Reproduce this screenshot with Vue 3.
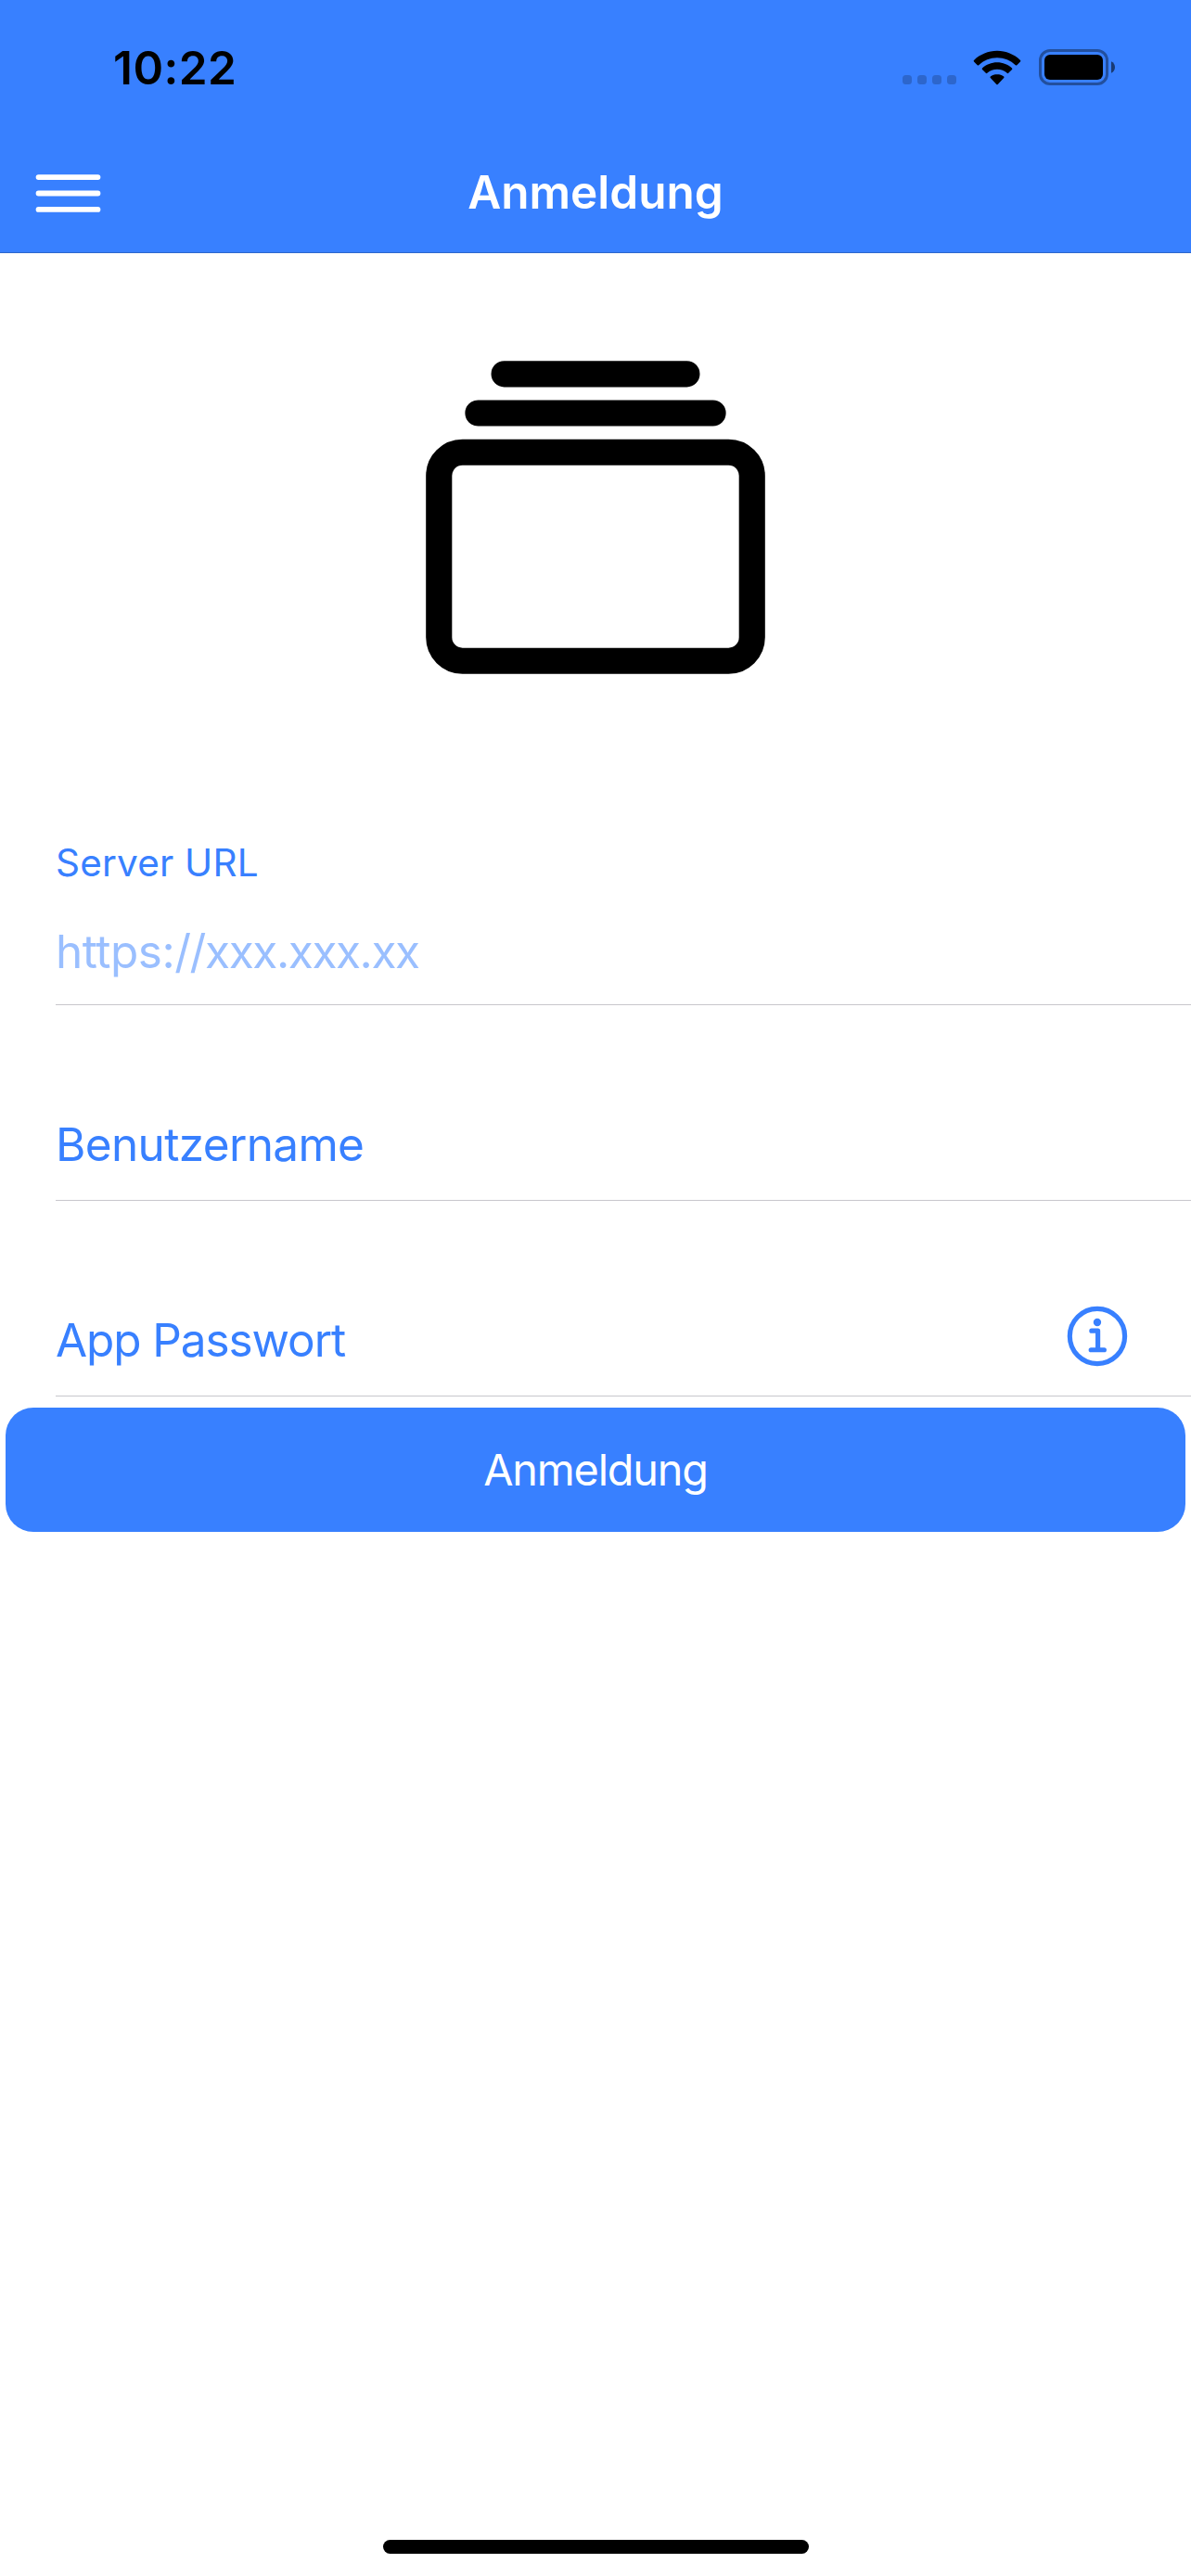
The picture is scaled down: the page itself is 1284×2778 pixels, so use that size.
<script setup>
import { ref } from 'vue'

const serverHint = ref({ scheme: 'https:', host: '//xxx.xxx.xx' })
</script>

<template>
  <div class="screen">
    <header class="header">
      <div class="status">
        <span class="time">10:22</span>
        <div class="indicators">
          <div class="dots"><i v-for="n in 4" :key="n" class="dot"></i></div>
          <svg class="wifi" viewBox="0 0 52 38" width="52" height="38">
            <path d="M26 0.8C16.5 0.8 7.6 4.6 1 10.9c-.5.5-.5 1 0 1.5l3.7 3.8c.5.5 1 .5 1.5 0C11.5 11.2 18.5 8.3 26 8.3s14.5 2.9 19.8 7.9c.5.5 1 .5 1.5 0l3.7-3.8c.5-.5.5-1 0-1.5C44.4 4.6 35.5.8 26 .8z" />
            <path d="M26 13.3c-6.1 0-11.7 2.3-16 6.2-.5.5-.5 1 0 1.5l3.8 3.8c.5.5 1 .5 1.5 0 2.9-2.5 6.6-4 10.7-4s7.8 1.5 10.7 4c.5.5 1 .5 1.5 0l3.8-3.8c.5-.5.5-1 0-1.5-4.3-3.9-9.9-6.2-16-6.2z" />
            <path d="M26 26c-2.7 0-5.2.9-7.2 2.5-.5.5-.5 1 0 1.5l6.5 6.9c.5.5.9.5 1.4 0l6.5-6.9c.5-.5.5-1 0-1.5-2-1.6-4.5-2.5-7.2-2.5z" />
          </svg>
          <svg class="battery" viewBox="0 0 84 40" width="84" height="40">
            <rect x="1.5" y="1.5" width="72" height="36" rx="10.5" fill="none" stroke="#000" stroke-opacity=".38" stroke-width="3" />
            <rect x="6" y="6" width="63" height="27" rx="6" />
            <path d="M78 13.3c2.5 1 4 3.5 4 6.2s-1.5 5.2-4 6.2z" fill-opacity=".55" />
          </svg>
        </div>
      </div>
      <div class="toolbar">
        <button class="menu" aria-label="Menu">
          <svg viewBox="0 0 512 512" width="93" height="93">
            <path d="M80 160h352M80 256h352M80 352h352" fill="none" stroke="#fff" stroke-width="32" stroke-linecap="round" />
          </svg>
        </button>
        <h1 class="title">Anmeldung</h1>
      </div>
    </header>

    <main>
      <div class="logo">
        <svg viewBox="0 0 512 512" width="450" height="450">
          <g fill="none" stroke="#000" stroke-width="32">
            <rect x="64" y="176" width="384" height="256" rx="28.87" />
            <path d="M144 80h224M112 128h288" stroke-linecap="round" />
          </g>
        </svg>
      </div>

      <form class="form" @submit.prevent>
        <div class="item stacked">
          <label class="caption">Server URL</label>
          <span class="placeholder"><span class="scheme">{{ serverHint.scheme }}</span>{{ serverHint.host }}</span>
        </div>
        <div class="item">
          <label class="label">Benutzername</label>
        </div>
        <div class="item">
          <label class="label password">App Passwort</label>
          <svg class="info" viewBox="0 0 512 512" width="82.5" height="82.5">
            <g fill="none" stroke="#3880ff" stroke-width="32" stroke-linecap="round">
              <circle cx="248" cy="248" r="184" />
              <path d="M210 212h42v124" stroke-linejoin="round" />
              <path d="M206 340h88" />
            </g>
            <circle cx="248" cy="155" r="26" fill="#3880ff" />
          </svg>
        </div>
        <button class="submit" type="submit">Anmeldung</button>
      </form>
    </main>

    <div class="home-bar"></div>
  </div>
</template>

<style>
body {
  background: #fff;
}
</style>

<style scoped>
.screen {
  box-sizing: border-box;
  width: 1284px;
  height: 2778px;
  padding-bottom: 24px;
  display: flex;
  flex-direction: column;
  overflow: hidden;
  background: #fff;
  font-family: Inter, "Liberation Sans", sans-serif;
}

.header {
  box-sizing: border-box;
  height: 273px;
  background: #3880ff;
  border-bottom: 1px solid #2d66cc;
}

.status {
  height: 146px;
  padding: 0 80px 0 122px;
  display: flex;
  align-items: center;
  justify-content: space-between;
}

.time {
  font-size: 49.5px;
  font-weight: 600;
  line-height: 60px;
  letter-spacing: 0.45px;
  color: #000;
}

.indicators {
  display: flex;
  align-items: center;
}

.dots {
  display: flex;
  gap: 6px;
  margin: 26px 18px 0 0;
}

.dot {
  width: 10px;
  height: 10px;
  border-radius: 3.5px;
  background: #2d66cc;
}

.wifi {
  margin-right: 19px;
}

.toolbar {
  height: 125px;
  display: grid;
  grid-template-columns: 147px 1fr 147px;
  align-items: center;
}

.menu {
  display: flex;
  justify-content: center;
  padding: 0;
  border: 0;
  background: none;
}

.menu svg {
  display: block;
  flex: none;
}

.title {
  margin: 0;
  padding-bottom: 4px;
  font-size: 49.5px;
  font-weight: 600;
  line-height: 60px;
  text-align: center;
  color: #fff;
}

.logo {
  box-sizing: border-box;
  height: 600px;
  padding-top: 60px;
  display: flex;
  justify-content: center;
}

.item {
  box-sizing: border-box;
  height: 211px;
  margin-left: 60px;
  padding-top: 120px;
  display: flex;
  align-items: flex-start;
  justify-content: space-between;
  border-bottom: 1px solid #c8c7cc;
  color: #3880ff;
}

.item.stacked {
  padding-top: 28px;
  flex-direction: column;
  justify-content: flex-start;
  gap: 35px;
}

.caption {
  font-size: 40.5px;
  line-height: 60px;
  letter-spacing: 0.2px;
}

.placeholder {
  font-size: 49.5px;
  line-height: 60px;
  letter-spacing: -1.4px;
  opacity: 0.5;
}

.scheme {
  letter-spacing: -0.5px;
}

.label {
  font-size: 49.5px;
  line-height: 60px;
  letter-spacing: -0.65px;
}

.label.password {
  letter-spacing: -1.1px;
}

.info {
  margin: -14.5px 59px 0 0;
}

.submit {
  display: block;
  width: 1272px;
  height: 134px;
  margin: 12px 6px 0;
  padding: 0 0 0;
  border: 0;
  border-radius: 30px;
  background: #3880ff;
  color: #fff;
  font: 400 46.8px Inter, "Liberation Sans", sans-serif;
  letter-spacing: -1.2px;
}

.home-bar {
  width: 459px;
  height: 15px;
  margin: auto auto 0;
  border-radius: 7.5px;
  background: #000;
}
</style>
